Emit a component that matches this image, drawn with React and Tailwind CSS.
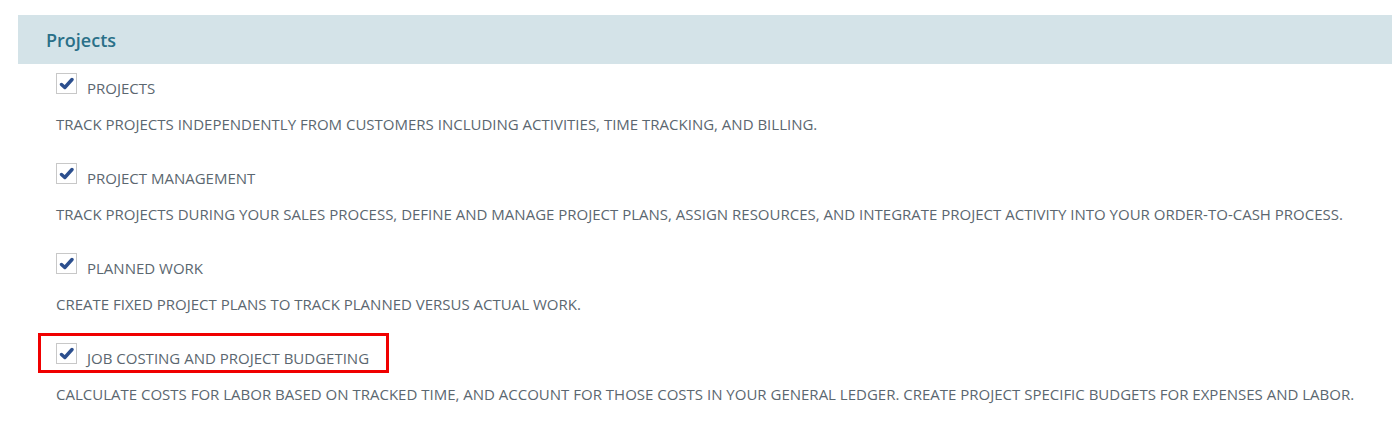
import React from "react";

const features = [
  {
    label: "PROJECTS",
    desc: "TRACK PROJECTS INDEPENDENTLY FROM CUSTOMERS INCLUDING ACTIVITIES, TIME TRACKING, AND BILLING.",
  },
  {
    label: "PROJECT MANAGEMENT",
    desc: "TRACK PROJECTS DURING YOUR SALES PROCESS, DEFINE AND MANAGE PROJECT PLANS, ASSIGN RESOURCES, AND INTEGRATE PROJECT ACTIVITY INTO YOUR ORDER-TO-CASH PROCESS.",
  },
  {
    label: "PLANNED WORK",
    desc: "CREATE FIXED PROJECT PLANS TO TRACK PLANNED VERSUS ACTUAL WORK.",
  },
  {
    label: "JOB COSTING AND PROJECT BUDGETING",
    desc: "CALCULATE COSTS FOR LABOR BASED ON TRACKED TIME, AND ACCOUNT FOR THOSE COSTS IN YOUR GENERAL LEDGER. CREATE PROJECT SPECIFIC BUDGETS FOR EXPENSES AND LABOR.",
    highlight: true,
  },
];

const Check = () => (
  <div className="w-[21px] h-[21px] border border-[#c8c8c8] bg-white flex items-center justify-center shrink-0">
    <svg width="15" height="13" viewBox="0 0 15 13">
      <path d="M2.5 7.5 L5.8 10.5 L13 2.5" fill="none" stroke="#2c4f8e" strokeWidth="3.4" strokeLinecap="round" strokeLinejoin="round" />
    </svg>
  </div>
);

export default function App() {
  return (
    <div className="bg-white w-[1392px] h-[432px] pt-[15px] pl-[18px] font-['Open_Sans',sans-serif] text-[#5b6770]">
      <div className="h-[49px] bg-[#d4e3e8] flex items-center pl-[28px] pt-[2px]">
        <h2 className="text-[18px] font-semibold text-[#2a7088]">Projects</h2>
      </div>

      <div className="pl-[38px] pt-[9px]">
        {features.map((f) => (
          <div key={f.label} className="h-[90px]">
            <div
              className={
                f.highlight
                  ? "flex items-start gap-[10px] w-[351px] h-[40px] -ml-[18px] -mt-[10px] mb-[11px] pl-[15px] pt-[7px] border-[3px] border-[#f00000]"
                  : "flex items-start gap-[10px] h-[41px]"
              }
            >
              <Check />
              <span className="text-[15px] leading-none pt-[8px]">{f.label}</span>
            </div>
            <p className="text-[15px] leading-[20px]">{f.desc}</p>
          </div>
        ))}
      </div>
    </div>
  );
}
